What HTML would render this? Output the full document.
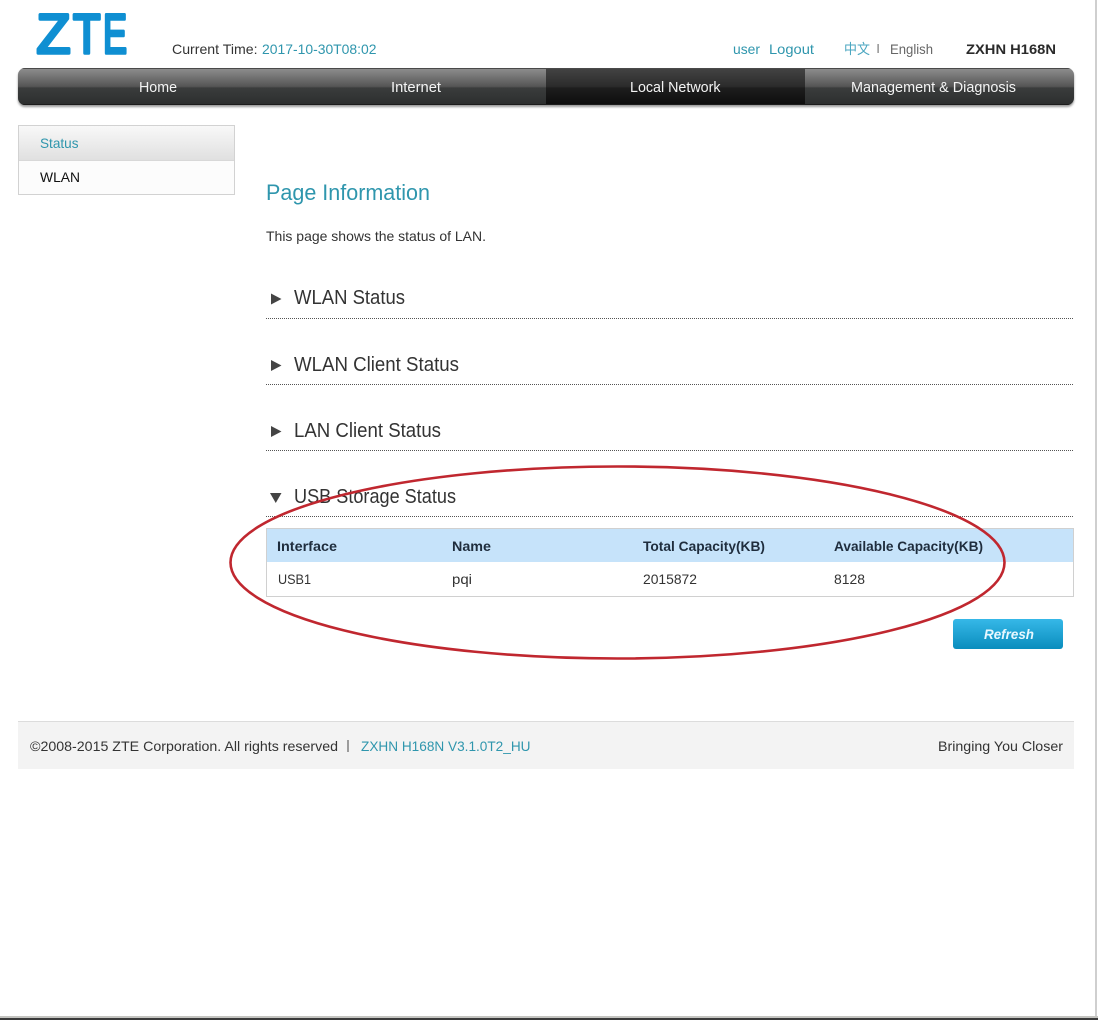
<!DOCTYPE html>
<html lang="en">
<head>
<meta charset="utf-8">
<title>ZXHN H168N</title>
<style>
html,body{margin:0;padding:0;background:#fff;width:1098px;height:1020px;overflow:hidden}
svg{display:block;position:absolute;left:0;top:0}
text{font-family:"Liberation Sans","Noto Sans CJK SC",sans-serif;font-size:14px;fill:#333;white-space:pre}
.teal{fill:#2f96ad}
.nav{fill:#f4f4f4;font-size:15px}
.sec{font-size:20px;fill:#333}
.th{font-weight:bold;fill:#1f2d3d;font-size:13.500px}
.logo{font-size:56px;fill:#0f8fd2;stroke:#0f8fd2;stroke-width:3.500px;stroke-linejoin:round}
</style>
</head>
<body>
<svg width="1098" height="1020" viewBox="0 0 1098 1020" xmlns="http://www.w3.org/2000/svg">
<defs>
<linearGradient id="navG" x1="0" y1="0" x2="0" y2="1">
<stop offset="0" stop-color="#8f8f8f"/><stop offset=".5" stop-color="#555"/>
<stop offset=".54" stop-color="#3a3c3c"/><stop offset="1" stop-color="#2c2e2e"/>
</linearGradient>
<linearGradient id="navA" x1="0" y1="0" x2="0" y2="1">
<stop offset="0" stop-color="#444"/><stop offset=".5" stop-color="#2b2b2b"/>
<stop offset=".54" stop-color="#1e1e1e"/><stop offset="1" stop-color="#0d0d0d"/>
</linearGradient>
<linearGradient id="sideG" x1="0" y1="0" x2="0" y2="1">
<stop offset="0" stop-color="#f8f8f8"/><stop offset="1" stop-color="#e0e0e0"/>
</linearGradient>
<linearGradient id="btnG" x1="0" y1="0" x2="0" y2="1">
<stop offset="0" stop-color="#36b8e8"/><stop offset="1" stop-color="#0a8dbd"/>
</linearGradient>
<clipPath id="navClip"><rect x="18" y="68" width="1056" height="37" rx="7"/></clipPath>
<filter id="soft" x="-2%" y="-20%" width="104%" height="150%"><feGaussianBlur stdDeviation="1"/></filter>
</defs>

<!-- logo -->
<text class="logo" x="36.500" y="53" textLength="34" lengthAdjust="spacingAndGlyphs">Z</text>
<text class="logo" x="73" y="53" textLength="27.500" lengthAdjust="spacingAndGlyphs">T</text>
<text class="logo" x="103" y="53" textLength="24" lengthAdjust="spacingAndGlyphs">E</text>

<!-- header text -->
<text x="172" y="54" textLength="85.500" lengthAdjust="spacingAndGlyphs">Current Time:</text>
<text class="teal" x="262" y="54" textLength="114.500" lengthAdjust="spacingAndGlyphs">2017-10-30T08:02</text>
<text class="teal" x="733" y="54" textLength="27" lengthAdjust="spacingAndGlyphs">user</text>
<text class="teal" x="769" y="54" textLength="45" lengthAdjust="spacingAndGlyphs">Logout</text>
<text class="teal" x="844" y="54" textLength="26" lengthAdjust="spacingAndGlyphs" style="fill:#4aa6c0">中文</text>
<rect x="877.500" y="44" width="1.200" height="9" fill="#777"/>
<text x="890" y="54" textLength="43" lengthAdjust="spacingAndGlyphs" style="fill:#666">English</text>
<text x="966" y="54" textLength="90" lengthAdjust="spacingAndGlyphs" style="font-weight:bold;fill:#2a2a2a">ZXHN H168N</text>

<!-- nav -->
<rect x="18" y="70" width="1056" height="37" rx="7" fill="#999" filter="url(#soft)"/>
<g clip-path="url(#navClip)">
<rect x="18" y="68" width="1056" height="37" fill="url(#navG)"/>
<rect x="546" y="68" width="259" height="37" fill="url(#navA)"/>
<rect x="18" y="68" width="1056" height="1" fill="#4a4a4a"/>
<rect x="18" y="104" width="1056" height="1" fill="#1c1c1c"/>
</g>
<text class="nav" x="139" y="92" textLength="38" lengthAdjust="spacingAndGlyphs">Home</text>
<text class="nav" x="391" y="92" textLength="50" lengthAdjust="spacingAndGlyphs">Internet</text>
<text class="nav" x="630" y="92" textLength="90.500" lengthAdjust="spacingAndGlyphs">Local Network</text>
<text class="nav" x="851" y="92" textLength="165" lengthAdjust="spacingAndGlyphs">Management &amp; Diagnosis</text>

<!-- sidebar -->
<rect x="18.500" y="125.500" width="216" height="69" fill="#fcfcfc" stroke="#d2d2d2"/>
<rect x="19" y="126" width="215" height="34" fill="url(#sideG)"/>
<rect x="19" y="160" width="215" height="1" fill="#d8d8d8"/>
<text class="teal" x="40" y="148" textLength="38.500" lengthAdjust="spacingAndGlyphs">Status</text>
<text x="40" y="182" textLength="40" lengthAdjust="spacingAndGlyphs" style="fill:#111">WLAN</text>

<!-- main -->
<text class="teal" x="266" y="200" textLength="164" lengthAdjust="spacingAndGlyphs" style="font-size:22px">Page Information</text>
<text x="266" y="241" textLength="220" lengthAdjust="spacingAndGlyphs">This page shows the status of LAN.</text>

<path d="M271 293.500 L281.500 299 L271 304.500Z" fill="#444"/>
<text class="sec" x="294" y="304" textLength="111" lengthAdjust="spacingAndGlyphs">WLAN Status</text>
<line x1="266" x2="1074" y1="318.500" y2="318.500" stroke="#555" stroke-dasharray="1 1"/>

<path d="M271 360 L281.500 365.500 L271 371Z" fill="#444"/>
<text class="sec" x="294" y="371" textLength="165" lengthAdjust="spacingAndGlyphs">WLAN Client Status</text>
<line x1="266" x2="1074" y1="384.500" y2="384.500" stroke="#555" stroke-dasharray="1 1"/>

<path d="M271 426 L281.500 431.500 L271 437Z" fill="#444"/>
<text class="sec" x="294" y="437" textLength="147" lengthAdjust="spacingAndGlyphs">LAN Client Status</text>
<line x1="266" x2="1074" y1="450.500" y2="450.500" stroke="#555" stroke-dasharray="1 1"/>

<path d="M270 493 L281.500 493 L275.750 503Z" fill="#444"/>
<text class="sec" x="294" y="503" textLength="162" lengthAdjust="spacingAndGlyphs">USB Storage Status</text>
<line x1="266" x2="1074" y1="516.500" y2="516.500" stroke="#555" stroke-dasharray="1 1"/>

<!-- table -->
<rect x="266.500" y="528.500" width="807" height="68" fill="#fff" stroke="#d0d0d0"/>
<rect x="267" y="529" width="806" height="33" fill="#c6e3fa"/>
<text class="th" x="277" y="551" textLength="60" lengthAdjust="spacingAndGlyphs">Interface</text>
<text class="th" x="452" y="551" textLength="39" lengthAdjust="spacingAndGlyphs">Name</text>
<text class="th" x="643" y="551" textLength="122" lengthAdjust="spacingAndGlyphs">Total Capacity(KB)</text>
<text class="th" x="834" y="551" textLength="149" lengthAdjust="spacingAndGlyphs">Available Capacity(KB)</text>
<text x="278" y="584" textLength="33" lengthAdjust="spacingAndGlyphs">USB1</text>
<text x="452" y="584" textLength="20" lengthAdjust="spacingAndGlyphs">pqi</text>
<text x="643" y="584" textLength="54" lengthAdjust="spacingAndGlyphs">2015872</text>
<text x="834" y="584" textLength="31" lengthAdjust="spacingAndGlyphs">8128</text>

<!-- button -->
<rect x="953" y="619" width="110" height="30" rx="3" fill="url(#btnG)"/>
<text x="984" y="639" textLength="50" lengthAdjust="spacingAndGlyphs" style="font-weight:bold;font-style:italic;fill:#e8f8ff">Refresh</text>

<!-- annotation ellipse -->
<ellipse cx="617.500" cy="562.500" rx="387" ry="96" fill="none" stroke="#c0272f" stroke-width="2.600"/>

<!-- footer -->
<rect x="18" y="721" width="1056" height="48" fill="#f3f3f3"/>
<rect x="18" y="721" width="1056" height="1" fill="#dcdcdc"/>
<text x="30" y="751" textLength="308" lengthAdjust="spacingAndGlyphs">©2008-2015 ZTE Corporation. All rights reserved</text>
<rect x="347.500" y="740" width="1" height="12" fill="#444"/>
<text class="teal" x="361" y="751" textLength="169.500" lengthAdjust="spacingAndGlyphs">ZXHN H168N V3.1.0T2_HU</text>
<text x="938" y="751" textLength="125" lengthAdjust="spacingAndGlyphs">Bringing You Closer</text>

<!-- window edges -->
<rect x="1095" y="0" width="2" height="1018" fill="#cfcfcf"/>
<rect x="0" y="1016" width="1098" height="2" fill="#c4c4c0"/>
<rect x="0" y="1018" width="1098" height="2" fill="#3a3a3a"/>
</svg>
</body>
</html>
